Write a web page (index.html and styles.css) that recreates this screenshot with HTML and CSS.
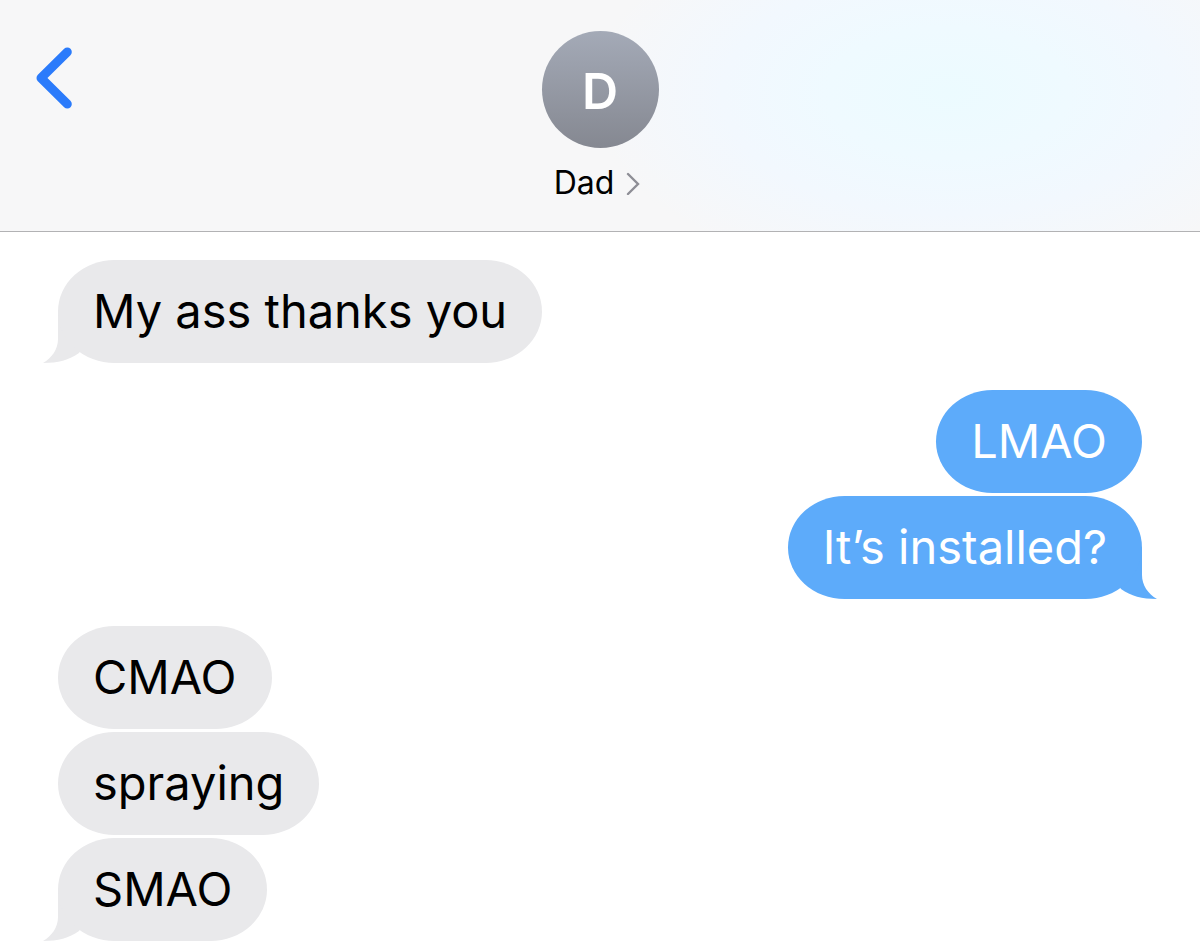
FILE: index.html
```html
<!DOCTYPE html>
<html lang="en">
<head>
<meta charset="utf-8">
<meta name="viewport" content="width=device-width, initial-scale=1">
<title>Dad</title>
<link rel="stylesheet" href="styles.css">
</head>
<body>
<header class="header">
  <button class="back" aria-label="Back"><svg width="36" height="62" viewBox="0 0 36 62"><path d="M31.3 5L5 31L31.3 57" fill="none" stroke="#2b7bfb" stroke-width="9" stroke-linecap="round" stroke-linejoin="round"/></svg></button>
  <button class="contact">
    <span class="avatar">D</span>
    <span class="name">Dad <svg class="chevron" width="14" height="24" viewBox="0 0 14 24"><path d="M2 3L12 13L2 23" fill="none" stroke="#8e8e96" stroke-width="2.4" stroke-linecap="round"/></svg></span>
  </button>
</header>
<main class="thread">
  <section class="group received">
    <p class="bubble">My ass thanks you<svg class="tail" width="50" height="52" viewBox="0 0 50 52"><path d="M15 0V28C15 38 9 47 0 52C15 52 26 49 36 42L50 20Z" fill="currentColor"/></svg></p>
  </section>
  <section class="group sent">
    <p class="bubble">LMAO</p>
    <p class="bubble">It’s installed?<svg class="tail" width="50" height="52" viewBox="0 0 50 52"><path d="M15 0V28C15 38 9 47 0 52C15 52 26 49 36 42L50 20Z" fill="currentColor"/></svg></p>
  </section>
  <section class="group received">
    <p class="bubble">CMAO</p>
    <p class="bubble">spraying</p>
    <p class="bubble">SMAO<svg class="tail" width="50" height="52" viewBox="0 0 50 52"><path d="M15 0V28C15 38 9 47 0 52C15 52 26 49 36 42L50 20Z" fill="currentColor"/></svg></p>
  </section>
</main>
</body>
</html>
```
FILE: styles.css
```css
* { box-sizing: border-box; }
body { margin: 0; background: #fff; color: #000; font-family: Inter, "Liberation Sans", sans-serif; }
button { border: 0; padding: 0; background: none; font: inherit; color: inherit; }
svg { display: block; }
.header {
  display: grid;
  grid-template-columns: 1fr auto 1fr;
  align-items: start;
  padding: 31px 36px 30px;
  border-bottom: 1px solid #b2b2b4;
  background: radial-gradient(ellipse 25% 70% at 79% 40%, #ecfbff 0%, #effaff 40%, #f2f8fe 75%, rgba(247, 247, 248, 0) 120%) #f7f7f8;
}
.back { justify-self: start; padding-top: 16px; }
.contact { display: flex; flex-direction: column; align-items: center; gap: 17px; }
.avatar {
  display: grid;
  place-items: center;
  width: 117px;
  height: 117px;
  padding-top: 3px;
  border-radius: 50%;
  background: linear-gradient(#a4aab7, #858891);
  color: #fff;
  font-size: 50px;
  font-weight: 600;
}
.name { display: flex; align-items: center; gap: 12px; padding-right: 6px; font-size: 32px; line-height: 36px; }
.thread { display: flex; flex-direction: column; gap: 27px; padding: 28px 58px 7px; }
.group { display: flex; flex-direction: column; align-items: flex-start; gap: 3px; }
.sent { align-items: flex-end; }
.bubble {
  position: relative;
  margin: 0;
  padding: 22px 35px 23px;
  border-radius: 57px / 52px;
  background: #e9e9eb;
  font-size: 47px;
  line-height: 58px;
}
.sent .bubble { background: #5dabfa; color: #fff; }
.tail { position: absolute; left: -15px; bottom: 0; color: #e9e9eb; z-index: -1; }
.sent .tail { left: auto; right: -15px; transform: scaleX(-1); color: #5dabfa; }
```
